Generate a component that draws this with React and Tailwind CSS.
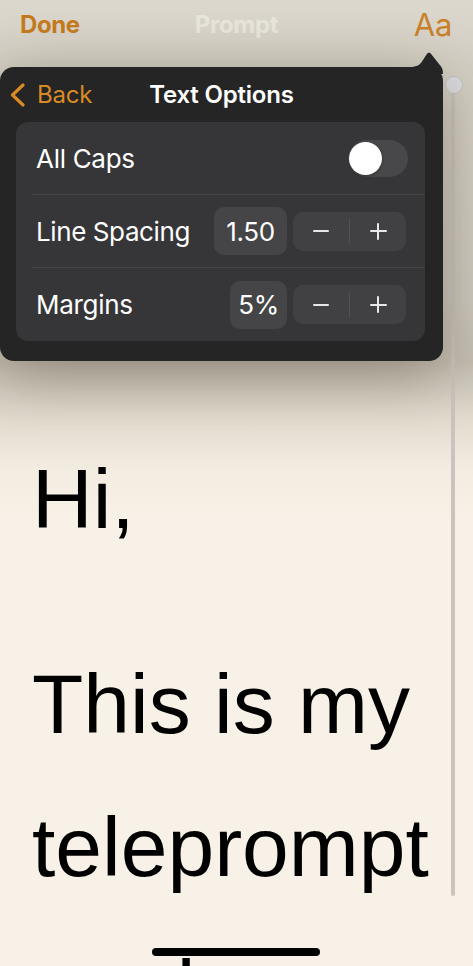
import React from "react";

function Stepper() {
  return (
    <div className="flex h-[39px] w-[113px] items-center rounded-[10px] bg-[#414143]">
      <div className="flex flex-1 items-center justify-center">
        <div className="h-[2px] w-[16px] rounded bg-[#e8e8e8]" />
      </div>
      <div className="h-[26px] w-px bg-[#505052]" />
      <div className="relative flex flex-1 items-center justify-center">
        <div className="h-[2px] w-[17px] rounded bg-[#e8e8e8]" />
        <div className="absolute h-[17px] w-[2px] rounded bg-[#e8e8e8]" />
      </div>
    </div>
  );
}

export default function App() {
  const ui = { fontFamily: "Inter, 'Noto Sans', sans-serif" };
  const big = { fontFamily: "'Liberation Sans', Arial, sans-serif" };
  return (
    <div
      className="relative h-[966px] w-[473px] overflow-hidden bg-[linear-gradient(to_bottom,#ddd8ce_0px,#d4cfc4_66px,#cdc8be_300px,#c4beb2_362px,#e2dccf_420px,#f3ece1_470px,#f8f1e7_520px)]"
      style={ui}
    >
      {/* top bar */}
      <div className="relative flex h-[50px] items-center justify-between pl-[20px] pr-[21px]">
        <span className="text-[24px] font-bold tracking-[-0.4px] text-[#c57b1d]">Done</span>
        <span className="absolute left-0 right-0 text-center text-[24px] font-bold tracking-[-0.3px] text-[#e9e5dd]">
          Prompt
        </span>
        <span className="text-[31px] font-normal tracking-[-0.3px] text-[#c98228]">Aa</span>
      </div>

      {/* script text */}
      <div className="pl-[32px] pt-[378px] text-black" style={big}>
        <div className="text-[84px] leading-[143px]">Hi,</div>
        <div className="mt-[62px] whitespace-nowrap text-[84px] leading-[143px]">
          <div>This is my</div>
          <div>teleprompt</div>
          <div>er also</div>
        </div>
      </div>

      {/* scrollbar */}
      <div className="absolute left-[451px] top-[85px] h-[811px] w-[4px] rounded-full bg-[#cbc4be]" />
      <div className="absolute left-[445px] top-[76px] h-[18px] w-[18px] rounded-full border border-[#c4c4c8] bg-[#dcdce0]" />

      {/* popover */}
      <div className="absolute left-0 top-[67px] h-[294px] w-[443px] rounded-[14px] bg-[#252525] shadow-[0_12px_60px_rgba(40,30,10,0.35)]">
        <svg className="absolute left-[410px] top-[-17px]" width="36" height="24" viewBox="0 0 36 24">
          <path
            d="M0 17 C7 17 10 15 13 10 L16.5 4.5 C18 2 20 2 21.5 4.5 L29 14 C32 17.5 33 19 33 24 L0 24 Z"
            fill="#252525"
          />
        </svg>

        <div className="relative flex h-[55px] items-center">
          <div className="flex items-center pl-[9px]">
            <svg width="17" height="24" viewBox="0 0 17 24" fill="none">
              <path d="M14 2 L3.5 12 L14 22" stroke="#d88b24" strokeWidth="3.2" strokeLinecap="round" strokeLinejoin="round" />
            </svg>
            <span className="ml-[11px] text-[24px] tracking-[-0.2px] text-[#d88b24]">Back</span>
          </div>
          <span className="absolute left-0 right-0 text-center text-[24px] font-semibold tracking-[-0.2px] text-white">
            Text Options
          </span>
        </div>

        <div className="ml-[16px] w-[409px] rounded-[12px] bg-[#363638]">
          <div className="flex h-[72px] items-center justify-between pl-[20px] pr-[17px]">
            <span className="text-[26px] tracking-[-0.3px] text-white">All Caps</span>
            <div className="flex h-[37px] w-[60px] items-center rounded-full bg-[#48484a] pl-[1px]">
              <div className="h-[33px] w-[33px] rounded-full bg-white shadow-[0_1px_3px_rgba(0,0,0,0.3)]" />
            </div>
          </div>
          <div className="ml-[16px] h-px bg-[#444446]" />
          <div className="flex h-[72px] items-center pl-[20px] pr-[19px]">
            <span className="flex-1 text-[26px] tracking-[-0.4px] text-white">Line Spacing</span>
            <div className="mr-[6px] flex h-[48px] w-[73px] items-center justify-center rounded-[10px] bg-[#454547] text-[26px] tracking-[-0.3px] text-white">
              1.50
            </div>
            <Stepper />
          </div>
          <div className="ml-[16px] h-px bg-[#444446]" />
          <div className="flex h-[73px] items-center pl-[20px] pr-[19px]">
            <span className="flex-1 text-[26px] tracking-[-0.3px] text-white">Margins</span>
            <div className="mr-[6px] flex h-[48px] w-[57px] items-center justify-center rounded-[10px] bg-[#454547] text-[26px] tracking-[-0.3px] text-white">
              5%
            </div>
            <Stepper />
          </div>
        </div>
      </div>

      {/* home indicator */}
      <div className="absolute left-[152px] top-[948px] h-[8px] w-[168px] rounded-full bg-black" />
    </div>
  );
}
